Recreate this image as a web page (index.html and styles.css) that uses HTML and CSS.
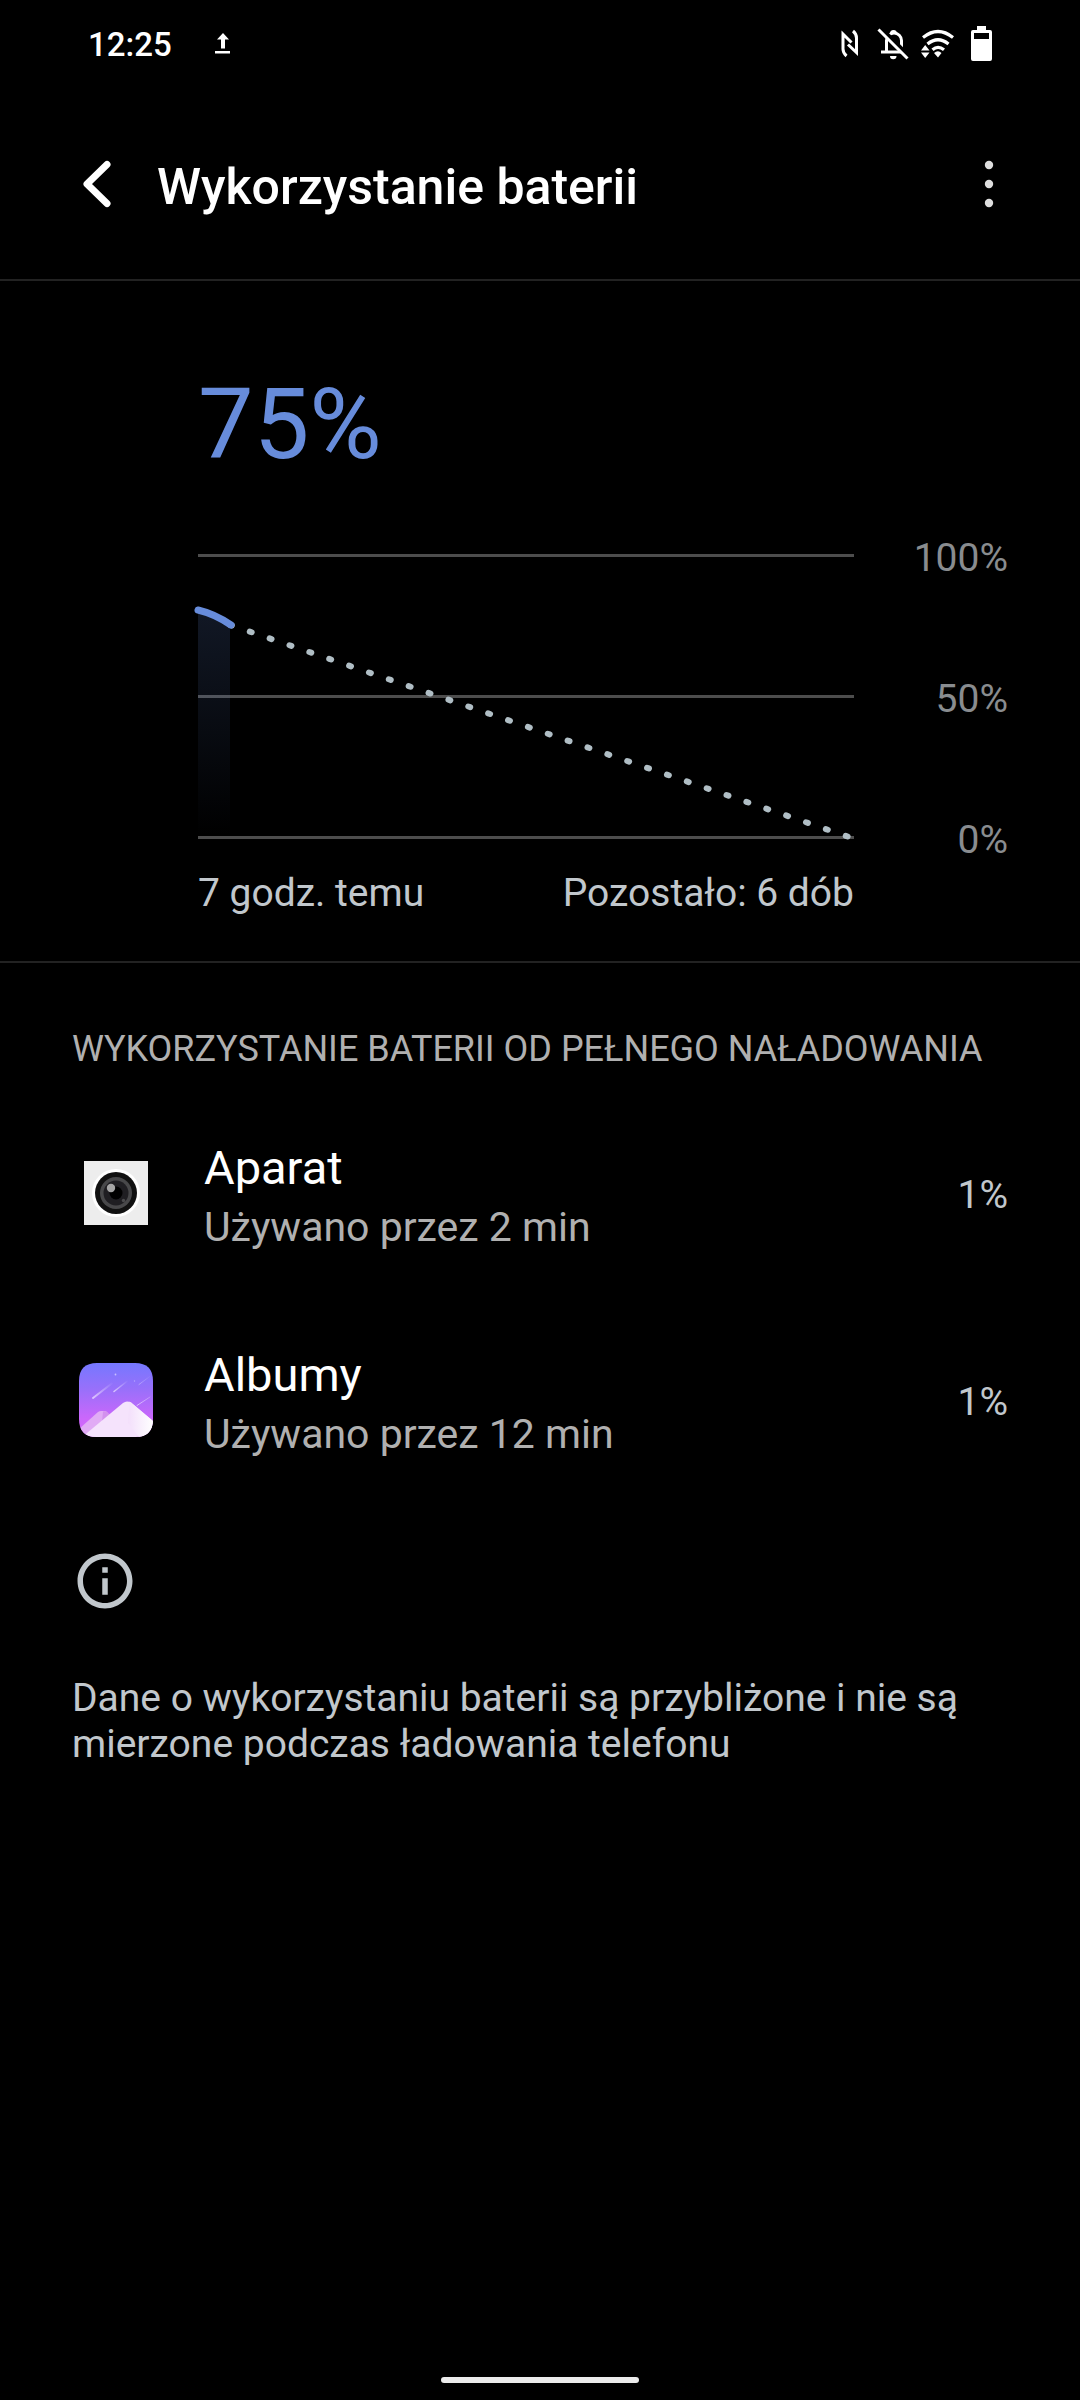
FILE: index.html
```html
<!DOCTYPE html>
<html lang="pl">
<head>
  <meta charset="UTF-8" />
  <meta name="viewport" content="width=device-width, initial-scale=1.0"/>
  <title>Wykorzystanie baterii</title>
  <link rel="stylesheet" href="styles.css">
</head>
<body>

  <div class="screen">
    <!-- Status bar -->
    <div class="status-bar">
      <span class="clock">12:25</span>
      <svg class="icon-upload" width="16" height="24" viewBox="0 0 16 24">
        <path d="M8 1l6 6.500h-4v9H6v-9H2z" fill="#fff"/>
        <rect x="0" y="19" width="15" height="2.500" fill="#fff"/>
      </svg>
      <div class="status-icons">
        <svg width="18" height="30" viewBox="0 0 18 30" fill="none" stroke="#fff" stroke-width="3">
          <path d="M5.500 27Q2 24 2 20V5l8.500 8.500"/>
          <path d="M12 2Q15.500 5 15.500 9v14.500L7 15.500"/>
        </svg>
        <svg class="icon-bell" width="32" height="34" viewBox="0 0 32 34">
          <path d="M9.500 24V13.500a7.500 7.500 0 0 1 15 0V24M4 25h22" fill="none" stroke="#fff" stroke-width="3"/>
          <path d="M13 6.500a3 3 0 0 1 7 0zM13 29h6.500a3.200 3.200 0 0 1-6.500 0z" fill="#fff"/>
          <path d="M3 0l29 29" stroke="#000" stroke-width="4"/>
          <path d="M1.500 2.500l29 29" stroke="#fff" stroke-width="3"/>
        </svg>
        <svg class="icon-wifi" width="34" height="30" viewBox="0 0 34 30">
          <g fill="none" stroke="#fff" stroke-width="3.200">
            <path d="M2 8.500Q17 -3.500 32 8.500"/>
            <path d="M6.500 15Q17 6.500 27.500 15"/>
            <path d="M11.500 20.800Q17 16 23 20.800"/>
          </g>
          <path d="M13 24q4-3.500 7.500 0L17 28.500zM0 21.500h8.500L4.200 16zM0 23.500h8.500L4.200 29z" fill="#fff"/>
        </svg>
        <svg class="icon-battery" width="21" height="36" viewBox="0 0 21 36">
          <path fill-rule="evenodd" d="M6 0h9v4h4a2 2 0 0 1 2 2v27a2 2 0 0 1-2 2H2a2 2 0 0 1-2-2V6a2 2 0 0 1 2-2h4zM3 7v6h15V7z" fill="#fff"/>
        </svg>
      </div>
    </div>

    <!-- Header -->
    <header class="top-bar">
      <button class="btn-back" aria-label="Wstecz">
        <svg width="30" height="48" viewBox="0 0 30 48" fill="none" stroke="#fff" stroke-width="7" stroke-linecap="round" stroke-linejoin="round">
          <path d="M25 4.500L5 24l20 19.500"/>
        </svg>
      </button>
      <h1>Wykorzystanie baterii</h1>
      <button class="btn-more" aria-label="Więcej opcji">
        <svg width="10" height="48" viewBox="0 0 10 48" fill="#dedede">
          <circle cx="5" cy="5" r="4.200"/>
          <circle cx="5" cy="24" r="4.200"/>
          <circle cx="5" cy="43" r="4.200"/>
        </svg>
      </button>
    </header>

    <!-- Battery chart -->
    <section class="battery">
      <p class="level">75%</p>
      <div class="chart">
        <svg class="plot" viewBox="0 0 656 285">
          <defs>
            <linearGradient id="usedFill" x1="0" y1="0" x2="0" y2="1">
              <stop offset="0" stop-color="#678cdb" stop-opacity="0.17"/>
              <stop offset="1" stop-color="#678cdb" stop-opacity="0"/>
            </linearGradient>
          </defs>
          <g fill="#4d4d4d">
            <rect width="656" height="3"/>
            <rect y="141" width="656" height="3"/>
            <rect y="282" width="656" height="3"/>
          </g>
          <path d="M0 56Q17 60 32 71V282H0z" fill="url(#usedFill)"/>
          <path d="M31.900 70.800L651 283" fill="none" stroke="#b0bec5" stroke-width="6" stroke-linecap="round" stroke-dasharray="2 19"/>
          <path d="M0 56Q17 60 33 71" fill="none" stroke="#678cdb" stroke-width="7" stroke-linecap="round"/>
        </svg>
        <div class="scale">
          <span>100%</span>
          <span>50%</span>
          <span>0%</span>
        </div>
      </div>
      <div class="times">
        <span>7 godz. temu</span>
        <span>Pozostało: 6 dób</span>
      </div>
    </section>

    <!-- App usage -->
    <section class="usage">
      <h2>WYKORZYSTANIE BATERII OD PEŁNEGO NAŁADOWANIA</h2>
      <ul>
        <li>
          <a href="#aparat" class="app">
            <span class="app-icon">
              <svg width="64" height="64" viewBox="0 0 64 64">
                <rect width="64" height="64" fill="#ededed"/>
                <circle cx="32" cy="32" r="24" fill="#fff"/>
                <circle cx="32" cy="32" r="21" fill="#111"/>
                <circle cx="32" cy="32" r="16" fill="#48484a"/>
                <circle cx="32" cy="32" r="12.500" fill="#1f1e22"/>
                <circle cx="32" cy="32" r="6.500" fill="#000"/>
                <circle cx="27" cy="27" r="4.200" fill="#a5a5a5"/>
                <circle cx="39.500" cy="39.500" r="1.700" fill="#4c4c4e"/>
              </svg>
            </span>
            <span class="app-text">
              <span class="app-name">Aparat</span>
              <span class="app-time">Używano przez 2 min</span>
            </span>
            <span class="app-percent">1%</span>
          </a>
        </li>
        <li>
          <a href="#albumy" class="app">
            <span class="app-icon">
              <svg width="74" height="74" viewBox="0 0 74 74">
                <defs>
                  <linearGradient id="sky" x1="0" y1="0" x2="0" y2="1">
                    <stop offset="0" stop-color="#7578ff"/>
                    <stop offset="0.350" stop-color="#9870fa"/>
                    <stop offset="0.750" stop-color="#cb67fb"/>
                    <stop offset="1" stop-color="#d568fa"/>
                  </linearGradient>
                  <linearGradient id="snow" x1="0" y1="0" x2="1" y2="0">
                    <stop offset="0" stop-color="#f3dffb"/>
                    <stop offset="1" stop-color="#fff"/>
                  </linearGradient>
                  <linearGradient id="trail" x1="0" y1="1" x2="1" y2="0">
                    <stop offset="0" stop-color="#fff" stop-opacity="0.600"/>
                    <stop offset="1" stop-color="#fff" stop-opacity="0"/>
                  </linearGradient>
                  <clipPath id="tile">
                    <path d="M18 0H56Q74 0 74 18V56Q74 74 56 74H18Q0 74 0 56V18Q0 0 18 0z"/>
                  </clipPath>
                </defs>
                <g clip-path="url(#tile)">
                  <rect width="74" height="74" fill="url(#sky)"/>
                  <g fill="none" stroke="url(#trail)" stroke-linecap="round">
                    <path d="M14 35L34 19.500" stroke-width="2"/>
                    <path d="M35 28.500L49 17.500" stroke-width="1.500"/>
                    <path d="M60 21.500L72 12.500M58 42.500L71 34" stroke-width="1"/>
                  </g>
                  <circle cx="36.500" cy="11.500" r="0.900" fill="#c9c0ff"/>
                  <circle cx="55.500" cy="18" r="0.700" fill="#b5a5ff"/>
                  <path d="M0 66L19 49Q20.500 48 22 48h3Q27 48 28 49l16 25H0z" fill="#e1abf5"/>
                  <path d="M24 48.500Q27 48 28 49l5 4-10 6z" fill="#d391ee"/>
                  <path d="M8 70L44 40Q46 38.500 48 38.500T52 39.500L74 58v16H4z" fill="#f5e3fc"/>
                  <path d="M50.500 38.500L52 39.500 74 58v16H60L49 60z" fill="url(#snow)"/>
                </g>
              </svg>
            </span>
            <span class="app-text">
              <span class="app-name">Albumy</span>
              <span class="app-time">Używano przez 12 min</span>
            </span>
            <span class="app-percent">1%</span>
          </a>
        </li>
      </ul>
    </section>

    <!-- Footnote -->
    <footer class="note">
      <svg width="66" height="66" viewBox="0 0 24 24" fill="#c1c7cc">
        <path d="M11 7h2v2h-2zm0 4h2v6h-2zm1-9C6.480 2 2 6.480 2 12s4.480 10 10 10 10-4.480 10-10S17.520 2 12 2zm0 18c-4.410 0-8-3.590-8-8s3.590-8 8-8 8 3.590 8 8-3.590 8-8 8z"/>
      </svg>
      <p>Dane o wykorzystaniu baterii są przybliżone i nie są mierzone podczas ładowania telefonu</p>
    </footer>

    <div class="home-bar"></div>
  </div>

</body>
</html>
```

FILE: styles.css
```css
* { margin: 0; padding: 0; box-sizing: border-box; }
body { font-family: Roboto, sans-serif; background-color: #000; color: #fff; }

svg { display: block; }

.screen {
  display: flex;
  flex-direction: column;
  min-height: 100vh;
}

/* Status bar */
.status-bar {
  display: flex;
  align-items: center;
  height: 88px;
  padding: 0 88px;
}

.clock {
  padding-top: 2px;
  font-size: 33px;
  font-weight: 500;
  line-height: 38px;
}

.icon-upload { margin-left: 43px; }

.status-icons {
  display: flex;
  align-items: center;
  margin-left: auto;
}

.icon-bell { margin-left: 18px; }
.icon-wifi { margin-left: 12px; }
.icon-battery { margin-left: 16px; }

/* Header */
.top-bar {
  display: flex;
  align-items: center;
  height: 193px;
  padding: 0 76px 0 72px;
  border-bottom: 2px solid #222;
}

.top-bar button {
  padding: 0 10px;
  background: none;
  border: none;
  cursor: pointer;
}

.top-bar h1 {
  margin-left: 35px;
  padding-top: 6px;
  font-size: 50px;
  font-weight: 500;
  line-height: 60px;
}

.btn-more { margin-left: auto; }

/* Battery chart */
.battery {
  padding: 85px 72px 45px 198px;
  border-bottom: 2px solid #222;
}

.level {
  font-size: 99px;
  line-height: 116px;
  color: #678cdb;
}

.chart {
  display: flex;
  align-items: flex-start;
  margin-top: 53px;
}

.plot {
  flex: 1;
  min-width: 0;
  margin-top: 19px;
  overflow: visible;
}

.scale {
  display: flex;
  flex-direction: column;
  justify-content: space-between;
  align-self: stretch;
  width: 154px;
  min-height: 328px;
  font-size: 39px;
  line-height: 46px;
  text-align: right;
  color: #898c8f;
}

.times {
  display: flex;
  justify-content: space-between;
  margin: 7px 154px 0 0;
  font-size: 39px;
  line-height: 46px;
  color: #c1c7cc;
}

/* App usage */
.usage { padding-top: 65px; }

.usage h2 {
  margin-bottom: 19px;
  padding: 0 72px;
  font-size: 36px;
  font-weight: 400;
  line-height: 42px;
  color: #b0b0b0;
}

.usage ul { list-style: none; }

.app {
  display: flex;
  align-items: center;
  height: 207px;
  padding: 0 72px;
  color: #fff;
  text-decoration: none;
}

.app-icon {
  display: flex;
  justify-content: center;
  width: 88px;
  margin-right: 44px;
}

.app-text {
  display: flex;
  flex-direction: column;
  gap: 7px;
  padding-top: 5px;
}

.app-name {
  font-size: 47px;
  line-height: 56px;
}

.app-time {
  font-size: 41px;
  line-height: 48px;
  color: #b0b0b0;
}

.app-percent {
  margin-left: auto;
  padding-top: 5px;
  font-size: 39px;
  line-height: 46px;
  color: #c1c7cc;
}

/* Footnote */
.note { padding: 45px 72px; }

.note p {
  margin-top: 61px;
  font-size: 39px;
  line-height: 46px;
  color: #c1c7cc;
}

.home-bar {
  width: 198px;
  height: 6px;
  margin: auto auto 17px;
  border-radius: 3px;
  background-color: #ebebeb;
}
```
